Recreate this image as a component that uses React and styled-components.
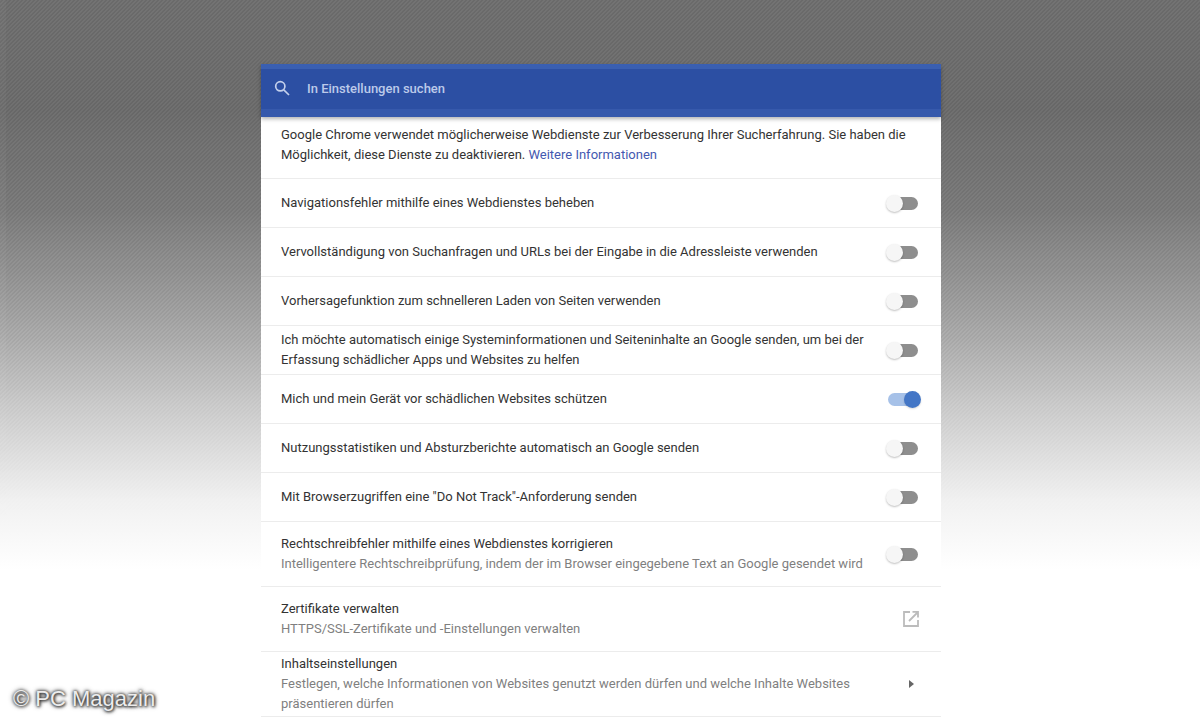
import React from "react";
import styled, { createGlobalStyle } from "styled-components";

const GlobalStyle = createGlobalStyle`
  html, body {
    margin: 0;
    padding: 0;
    height: 720px;
    overflow: hidden;
    font-family: Roboto, "Liberation Sans", sans-serif;
  }
`;

const rows = [
  { title: "Navigationsfehler mithilfe eines Webdienstes beheben" },
  { title: "Vervollständigung von Suchanfragen und URLs bei der Eingabe in die Adressleiste verwenden" },
  { title: "Vorhersagefunktion zum schnelleren Laden von Seiten verwenden" },
  {
    title:
      "Ich möchte automatisch einige Systeminformationen und Seiteninhalte an Google senden, um bei der Erfassung schädlicher Apps und Websites zu helfen",
  },
  { title: "Mich und mein Gerät vor schädlichen Websites schützen", on: true },
  { title: "Nutzungsstatistiken und Absturzberichte automatisch an Google senden" },
  { title: 'Mit Browserzugriffen eine "Do Not Track"-Anforderung senden' },
  {
    title: "Rechtschreibfehler mithilfe eines Webdienstes korrigieren",
    sub: "Intelligentere Rechtschreibprüfung, indem der im Browser eingegebene Text an Google gesendet wird",
  },
];

function SearchIcon() {
  return (
    <svg width="16" height="16" viewBox="0 0 16 16" fill="none" stroke="#c3d0ec" strokeWidth="1.7">
      <circle cx="6.3" cy="6.3" r="4.6" />
      <path d="M9.8 9.8 15 15" />
    </svg>
  );
}

function ExternalIcon() {
  return (
    <svg width="18" height="18" viewBox="0 0 18 18" fill="none" stroke="#bcbcbc" strokeWidth="1.8">
      <path d="M8 2H2v14h14v-6" />
      <path d="M10.5 1.9H16v5.5M16 2 7 11" />
    </svg>
  );
}

export default function App() {
  return (
    <Page>
      <GlobalStyle />
      <Panel>
        <SearchBar>
          <SearchIcon />
          <SearchText>In Einstellungen suchen</SearchText>
        </SearchBar>
        <Intro>
          Google Chrome verwendet möglicherweise Webdienste zur Verbesserung Ihrer Sucherfahrung. Sie haben die
          Möglichkeit, diese Dienste zu deaktivieren. <MoreLink>Weitere Informationen</MoreLink>
        </Intro>
        {rows.map((row) => (
          <Row key={row.title} $tall={row.sub}>
            <RowText>
              <Title>{row.title}</Title>
              {row.sub && <Sub>{row.sub}</Sub>}
            </RowText>
            <Toggle $on={row.on}>
              <Knob $on={row.on} />
            </Toggle>
          </Row>
        ))}
        <Row $tall>
          <RowText>
            <Title>Zertifikate verwalten</Title>
            <Sub>HTTPS/SSL-Zertifikate und -Einstellungen verwalten</Sub>
          </RowText>
          <IconSlot>
            <ExternalIcon />
          </IconSlot>
        </Row>
        <Row $tall>
          <RowText>
            <Title>Inhaltseinstellungen</Title>
            <Sub>
              Festlegen, welche Informationen von Websites genutzt werden dürfen und welche Inhalte Websites
              präsentieren dürfen
            </Sub>
          </RowText>
          <ArrowSlot>
            <Arrow />
          </ArrowSlot>
        </Row>
      </Panel>
      <Watermark>© PC Magazin</Watermark>
    </Page>
  );
}

const Page = styled.div`
  position: relative;
  width: 1200px;
  height: 720px;
  overflow: hidden;
  box-sizing: border-box;
  padding-top: 64px;
  background: linear-gradient(180deg, #6e6e6e 0, #6b6b6b 110px, #7a7a7a 210px, #a4a4a4 320px, #d0d0d0 415px, #f1f1f1 500px, #ffffff 570px);

  /* fine diagonal hatch that fades out with the gradient */
  &::before {
    content: "";
    position: absolute;
    inset: 0;
    background:
      linear-gradient(90deg, rgba(255, 255, 255, 0.03) 0 6px, transparent 6px),
      repeating-linear-gradient(135deg, rgba(255, 255, 255, 0.035) 0 1.414px, rgba(0, 0, 0, 0.035) 1.414px 2.828px);
    mask-image: linear-gradient(180deg, #000 0, #000 340px, transparent 520px);
  }
`;

const Panel = styled.div`
  position: relative;
  width: 680px;
  margin-left: 261px;
  background: #fff;
`;

const SearchBar = styled.div`
  height: 53px;
  box-sizing: border-box;
  padding: 4px 0 9px 13px;
  display: flex;
  align-items: center;
  gap: 17px;
  background: linear-gradient(180deg, #3a5fb1 0 5px, #2c4fa3 5px 45px, #3659ac 45px);
  box-shadow: 0 2px 4px rgba(0, 0, 0, 0.3);
  position: relative;
`;

const SearchText = styled.div`
  color: #bccaea;
  font-size: 13px;
  font-weight: 500;
`;

const Intro = styled.div`
  height: 62px;
  box-sizing: border-box;
  padding: 8px 20px 0;
  font-size: 13px;
  line-height: 20px;
  color: #333;
  border-bottom: 1px solid #ececec;
`;

const MoreLink = styled.span`
  color: #4459b0;
`;

const Row = styled.div`
  height: ${(p) => (p.$tall ? "65px" : "49px")};
  box-sizing: border-box;
  padding: 0 20px;
  display: flex;
  align-items: center;
  justify-content: space-between;
  border-bottom: 1px solid #ececec;
`;

const RowText = styled.div`
  width: 590px;
  font-size: 13px;
  line-height: 20px;
`;

const Title = styled.div`
  color: #333;
`;

const Sub = styled.div`
  color: #7f7f7f;
`;

const Toggle = styled.div`
  position: relative;
  width: 30px;
  height: 13px;
  margin-right: 3px;
  border-radius: 7px;
  background: ${(p) => (p.$on ? "#a6c1e8" : "#8e8e8e")};
`;

const Knob = styled.div`
  position: absolute;
  top: -2px;
  left: ${(p) => (p.$on ? "16px" : "-2px")};
  width: 17px;
  height: 17px;
  border-radius: 50%;
  background: ${(p) => (p.$on ? "#4376c6" : "#f6f6f6")};
  box-shadow: 0 1px 2px rgba(0, 0, 0, ${(p) => (p.$on ? 0.15 : 0.25)});
`;

const IconSlot = styled.div`
  display: flex;
  margin-right: 1px;
`;

const ArrowSlot = styled.div`
  display: flex;
  margin-right: 7px;
`;

const Arrow = styled.div`
  width: 0;
  height: 0;
  border-left: 5px solid #666;
  border-top: 4px solid transparent;
  border-bottom: 4px solid transparent;
`;

const Watermark = styled.div`
  position: absolute;
  left: 13px;
  bottom: 8px;
  font-family: "Liberation Sans", Arial, sans-serif;
  font-size: 22px;
  line-height: 26px;
  color: #ececec;
  text-shadow: 0 0 3px #333, 0 0 5px #333, 1px 1px 3px #444;
`;
